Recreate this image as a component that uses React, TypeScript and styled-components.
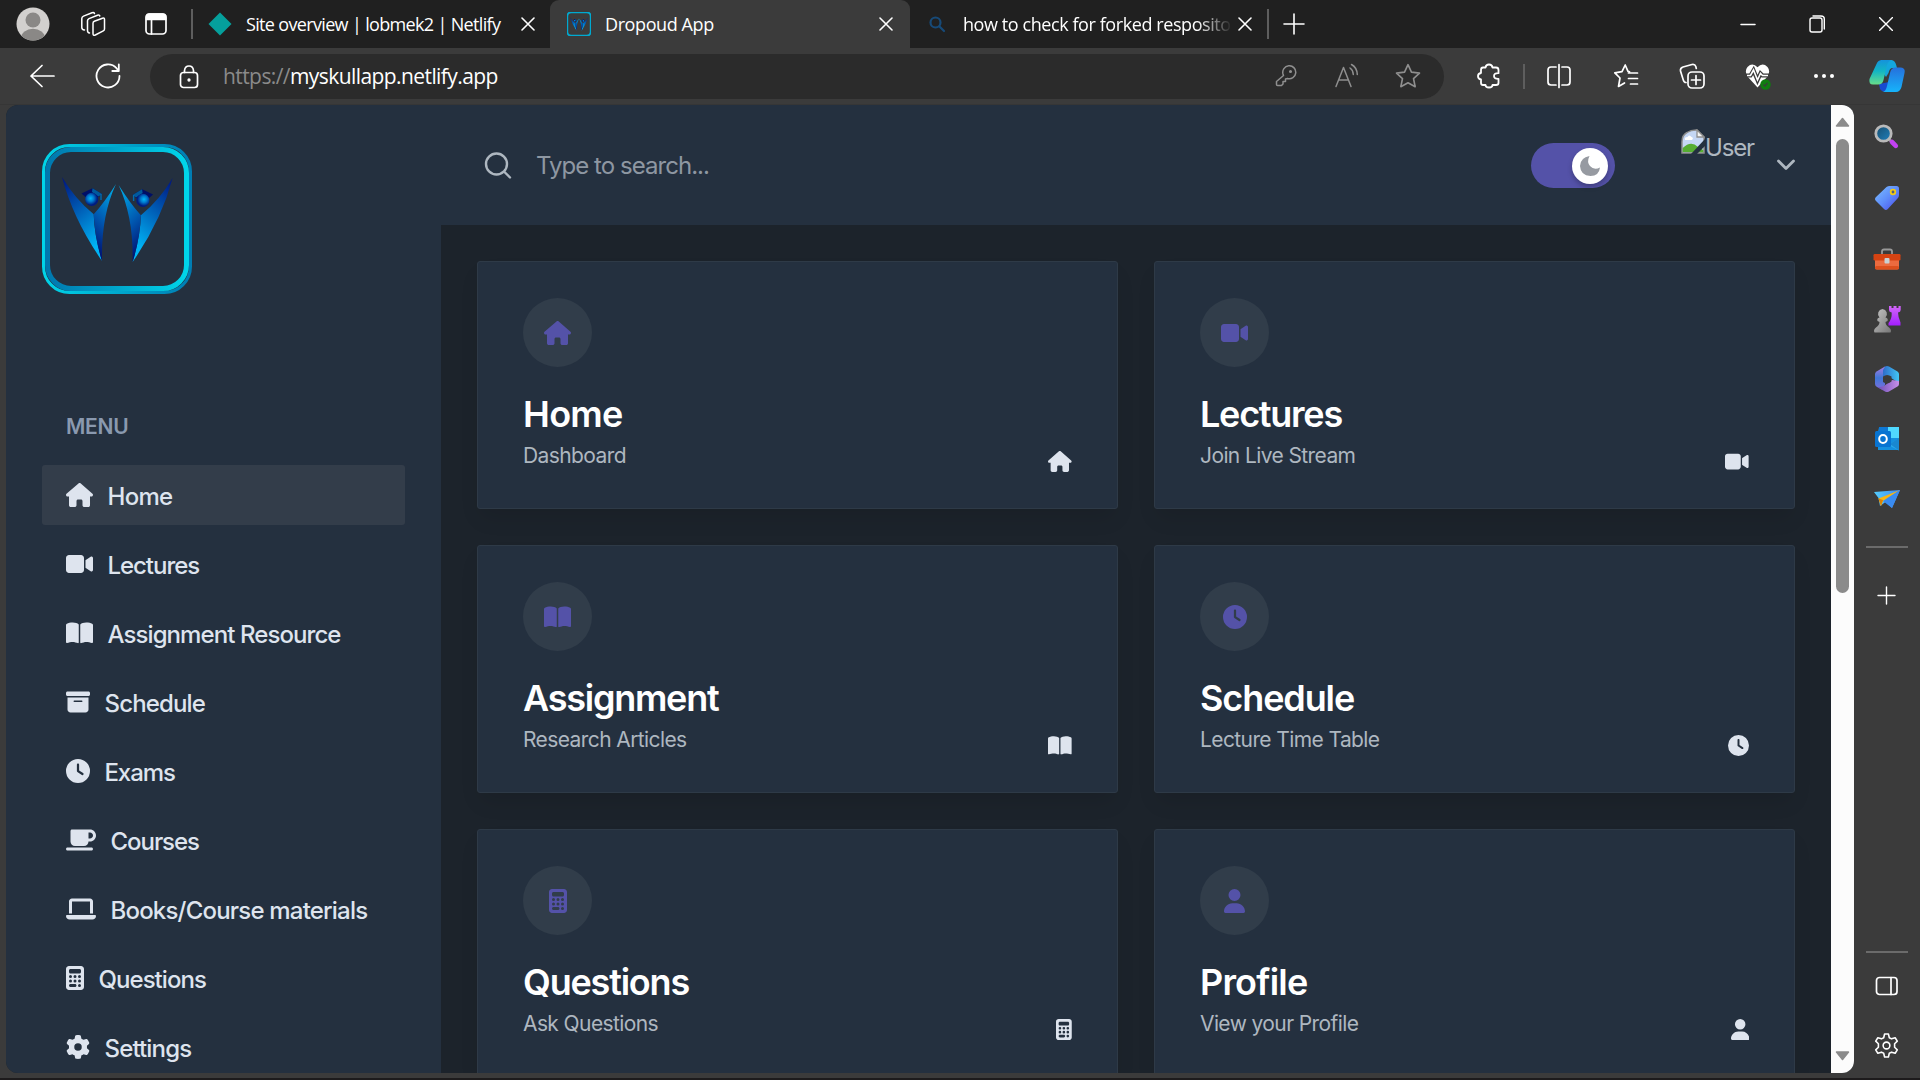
import React from "react";
import styled, { createGlobalStyle, css } from "styled-components";
import {
  FaHouse, FaVideo, FaBookOpen, FaBoxArchive, FaClock, FaMugSaucer,
  FaLaptop, FaCalculator, FaGear, FaUser,
} from "react-icons/fa6";

const GlobalStyle = createGlobalStyle`
  * { box-sizing: border-box; }
  body { margin: 0; overflow: hidden; background: #3b3b3b; }
  svg { display: block; flex: none; }
`;

const uiFont = `"Open Sans", "Noto Sans", sans-serif`;
const pageFont = `Inter, "Liberation Sans", sans-serif`;

/* ---------- browser frame ---------- */

const Window = styled.div`
  width: 1920px;
  height: 1080px;
  display: flex;
  flex-direction: column;
  background: #3b3b3b;
  overflow: hidden;
  border-bottom: 2px solid #1d1b1c;
`;

const TitleBar = styled.header`
  height: 48px;
  flex: none;
  display: flex;
  align-items: stretch;
  background: #202020;
  color: #fff;
  font-family: ${uiFont};
`;

const Slot = styled.span<{ $w: number }>`
  width: ${(p) => p.$w}px;
  flex: none;
  display: flex;
  align-items: center;
  justify-content: center;
`;

const Separator = styled.span<{ $h: number }>`
  width: 2px;
  height: ${(p) => p.$h}px;
  flex: none;
  align-self: center;
  background: #5e5e5e;
`;

const TabItem = styled.div<{ $active?: boolean }>`
  width: ${(p) => (p.$active ? 360 : 357)}px;
  flex: none;
  display: flex;
  align-items: center;
  padding-left: ${(p) => (p.$active ? 17 : 15)}px;
  padding-right: ${(p) => (p.$active ? 12 : 10)}px;
  ${(p) => p.$active && css`
    background: #3b3b3b;
    border-radius: 9px 9px 0 0;
  `}
`;

const TabTitle = styled.span<{ $fade?: boolean; $track: number }>`
  flex: 1;
  margin-left: 14px;
  font-size: 18px;
  line-height: 46px;
  padding-bottom: 1px;
  letter-spacing: ${(p) => p.$track}px;
  white-space: nowrap;
  ${(p) => p.$fade && css`
    margin-right: -2px;
    mask-image: linear-gradient(90deg, #000 86%, transparent 99%);
  `}
`;

const Spacer = styled.span`flex: 1;`;

const Toolbar = styled.div`
  height: 57px;
  flex: none;
  display: flex;
  align-items: center;
  padding: 0 0 1px 9px;
  background: #3b3b3b;
  box-shadow: inset 0 -1px 0 #363636;
`;

const AddressBar = styled.div`
  width: 1294px;
  height: 45px;
  flex: none;
  margin-left: 9px;
  padding: 0 7px 0 27px;
  border-radius: 23px;
  background: #2b2b2b;
  display: flex;
  align-items: center;
`;

const Url = styled.span`
  flex: 1;
  margin-left: 22px;
  font-family: ${uiFont};
  font-size: 21px;
  letter-spacing: -0.58px;
  color: #fff;
  span { color: #8a8a8a; }
`;

const Body = styled.div`
  flex: 1;
  min-height: 0;
  display: flex;
  padding: 0 0 5px 6px;
`;

const Viewport = styled.div`
  width: 1848px;
  flex: none;
  display: flex;
  overflow: hidden;
  border-radius: 12px;
  background: #1c232b;
  font-family: ${pageFont};
`;

const ScrollTrack = styled.div`
  width: 23px;
  flex: none;
  display: flex;
  flex-direction: column;
  align-items: center;
  justify-content: space-between;
  padding: 12px 0 12px;
  background: #fcfcfc;
`;

const ScrollThumb = styled.div`
  width: 13px;
  height: 454px;
  margin-top: 12px;
  margin-bottom: auto;
  border-radius: 7px;
  background: #8b8b8b;
`;

const EdgeRail = styled.aside`
  flex: 1;
  display: flex;
  flex-direction: column;
  align-items: center;
  padding: 2px 1px 0 0;
`;

const RailSlot = styled.span<{ $h?: number }>`
  height: ${(p) => p.$h || 60}px;
  display: flex;
  align-items: center;
  justify-content: center;
`;

const RailRule = styled.span`
  width: 42px;
  height: 2px;
  background: #6b6b6b;
`;

/* ---------- dashboard page ---------- */

const Sidebar = styled.nav`
  width: 435px;
  flex: none;
  padding: 39px 36px 0;
  background: #24303f;
`;

const MenuHeading = styled.h3`
  margin: 115px 0 0 24px;
  height: 56px;
  font-size: 21px;
  font-weight: 600;
  line-height: 36px;
  letter-spacing: -0.3px;
  color: #8a99af;
`;

const MenuList = styled.ul`
  margin: 0;
  padding: 0;
  display: flex;
  flex-direction: column;
  gap: 9px;
  list-style: none;
`;

const MenuItem = styled.li<{ $active?: boolean; $track?: number }>`
  height: 60px;
  padding: 0 24px;
  display: flex;
  align-items: center;
  gap: 15px;
  border-radius: 3px;
  font-size: 24px;
  font-weight: 500;
  letter-spacing: ${(p) => p.$track ?? -0.92}px;
  white-space: nowrap;
  color: #dee4ee;
  background: ${(p) => (p.$active ? "#333d4a" : "transparent")};
  span { padding-top: 2px; margin-left: -0.5px; }
`;

const Main = styled.main`
  width: 1390px;
  flex: none;
  display: flex;
  flex-direction: column;
`;

const Header = styled.div`
  height: 120px;
  flex: none;
  display: flex;
  align-items: center;
  padding: 0 36px 0 43px;
  background: #24303f;
`;

const SearchHint = styled.span`
  flex: 1;
  margin-left: 23px;
  padding-top: 1px;
  font-size: 24px;
  letter-spacing: -0.96px;
  color: #8e97a2;
`;

const Toggle = styled.div`
  width: 84px;
  height: 45px;
  flex: none;
  margin-top: 1px;
  padding-right: 7px;
  border-radius: 23px;
  background: #5452a8;
  display: flex;
  align-items: center;
  justify-content: flex-end;
`;

const Knob = styled.span`
  width: 36px;
  height: 36px;
  border-radius: 50%;
  background: #fff;
  box-shadow: 0 3px 5px rgba(0, 0, 0, 0.25);
  display: flex;
  align-items: center;
  justify-content: center;
`;

const UserBox = styled.div`
  width: 72px;
  height: 72px;
  flex: none;
  margin: 0 24px 0 66px;
  display: flex;
  align-items: flex-start;
  font-size: 24px;
  line-height: 38px;
  letter-spacing: -1.2px;
  color: #aeb7c0;
`;

const CardGrid = styled.section`
  padding: 36px;
  display: grid;
  grid-template-columns: 1fr 1fr;
  grid-auto-rows: 248px;
  gap: 36px;
`;

const CardBox = styled.article`
  padding: 36px 45px;
  border: 1px solid #2e3a47;
  border-radius: 3px;
  background: #24303f;
  box-shadow: 0 12px 20px -4px rgba(0, 0, 0, 0.1);
`;

const Badge = styled.div`
  width: 69px;
  height: 69px;
  border-radius: 50%;
  background: #313d4a;
  color: #5452a8;
  display: flex;
  align-items: center;
  justify-content: center;
  padding-top: 1px;
`;

const CardFoot = styled.div`
  margin-top: 24px;
  display: flex;
  justify-content: space-between;
  align-items: flex-end;
  color: #dee4ee;
  > svg { margin-bottom: 1px; }
`;

const CardTitle = styled.h4<{ $track: number }>`
  margin: 0;
  font-size: 36px;
  line-height: 46px;
  font-weight: 600;
  letter-spacing: ${(p) => p.$track}px;
  color: #fff;
`;

const CardNote = styled.span`
  display: block;
  height: 36px;
  font-size: 21px;
  line-height: 38px;
  letter-spacing: -0.6px;
  color: #aeb7c0;
`;

/* ---------- drawings ---------- */

type GlyphProps = {
  w?: number; h?: number; box?: string; color?: string; sw?: number; children: React.ReactNode;
};
const Glyph = ({ w = 24, h = w, box, color = "#fff", sw = 1.5, children }: GlyphProps) => (
  <svg width={w} height={h} viewBox={box || `0 0 ${w} ${h}`} fill="none" stroke={color}
    strokeWidth={sw} strokeLinecap="round" strokeLinejoin="round">{children}</svg>
);

const Logo = ({ size, id }: { size: number; id: string }) => {
  const u = (n: string) => `url(#${id}${n})`;
  const small = size < 40;
  return (
    <svg width={size} height={size} viewBox="0 0 150 150">
      <defs>
        <linearGradient id={id + "a"}><stop offset="0" stopColor="#00d4e8" /><stop offset="1" stopColor="#007db3" /></linearGradient>
        <linearGradient id={id + "b"}><stop offset="0" stopColor="#0077ae" /><stop offset="1" stopColor="#00d5ea" /></linearGradient>
        <linearGradient id={id + "c"} x1="0" y1="0" x2="0.4" y2="1"><stop offset="0" stopColor="#00127c" /><stop offset=".55" stopColor="#0067bd" /><stop offset="1" stopColor="#00b4f5" /></linearGradient>
        <linearGradient id={id + "d"} x1=".6" y1="0" x2=".3" y2="1"><stop offset="0" stopColor="#00a5e4" /><stop offset=".5" stopColor="#0058b0" /><stop offset="1" stopColor="#000a6c" /></linearGradient>
        <radialGradient id={id + "e"} cx=".42" cy=".42"><stop offset="0" stopColor="#00b9fa" /><stop offset=".5" stopColor="#0078cd" /><stop offset="1" stopColor="#001b80" /></radialGradient>
      </defs>
      <rect x="1.5" y="1.5" width="147" height="147" rx="26" fill="none" stroke={small ? "#00a9d0" : u("a")} strokeWidth={small ? 12 : 3} />
      {!small && <rect x="5.5" y="5.5" width="139" height="139" rx="23.5" fill="none" stroke={u("b")} strokeWidth="5" />}
      {[false, true].map((flip) => (
        <g key={String(flip)} transform={flip ? "translate(150.6 1) scale(-1 1)" : undefined}>
          <path d="M20 33Q33 55 51.7 70.3Q52 90 60 117Q31 75 20 33Z" fill={u("c")} />
          <path d="M74 40Q62 59 51.7 70.3Q53 96 60 117Q59 72 74 40Z" fill={u("d")} />
          <path d="M39.5 49.5L50.5 44.2L60 50L56.5 53H43.500Z" fill="#000f66" />
          <path d="M50.5 44.2L60 50L56.5 52.500L50 48Z" fill="#005a9c" />
          <circle cx="49.7" cy="55.4" r="6.6" fill={u("e")} />
          <path d="M59 50V56" stroke="#006cb0" strokeWidth="1.4" />
        </g>
      ))}
    </svg>
  );
};

const Cross = ({ s = 12, sw = 1.6 }: { s?: number; sw?: number }) => (
  <Glyph w={14} sw={sw}><path d={`M${7 - s / 2} ${7 - s / 2}l${s} ${s}m0-${s}l-${s} ${s}`} /></Glyph>
);
const Plus = ({ s = 20, sw = 1.6 }: { s?: number; sw?: number }) => (
  <Glyph w={s + 2} sw={sw}><path d={`M${s / 2 + 1} 1v${s}M1 ${s / 2 + 1}h${s}`} /></Glyph>
);

const Avatar = () => (
  <svg width="34" height="34" viewBox="0 0 34 34">
    <clipPath id="av"><circle cx="17" cy="17" r="16.5" /></clipPath>
    <g clipPath="url(#av)"><rect width="34" height="34" fill="#d2d0ce" />
      <circle cx="17" cy="13" r="7.5" fill="#8a8886" /><ellipse cx="17" cy="31" rx="12" ry="9.2" fill="#8a8886" /></g>
  </svg>
);

const Workspaces = () => (
  <Glyph w={26} h={26}>
    <path d="M13 12.200Q13 10.800 14.300 10.300L22.500 7.200Q24.500 6.600 24.500 8.500V18Q24.500 19.300 23.300 19.900L15.300 24Q13 25 13 22.500Z" />
    <path d="M9.500 22Q7.500 21.800 7.500 19.500V9.800Q7.500 8.300 9 7.600L17.500 4.200Q19.500 3.700 19.800 5" />
    <path d="M4.500 19Q1.800 18.800 1.800 16.500V7.500Q1.800 5.800 3.500 5.100L12 1.800Q14 1.200 14.500 2.500" />
  </Glyph>
);

const TabActions = () => (
  <Glyph w={24} h={24} sw={1.7}><rect x="2" y="2" width="20" height="20" rx="3.500" /><path d="M2.500 3.500Q3 2 5 2h14q2 0 2.700 1.500V7.500H2.500Z" fill="#fff" /><path d="M7.500 7.500V22" /></Glyph>
);

const starPath = "M12 1.500L15.200 8.400L22.600 9.300L17.100 14.400L18.600 21.900L12 18.200L5.400 21.900L6.900 14.400L1.400 9.300L8.800 8.400Z";
const gearPath = "M10.300 1.800h3.400l.8 3.300 2 1 3.200-1 1.900 3-2.400 2.400v3l2.400 2.400-1.900 3-3.200-1-2 1-.8 3.300h-3.400l-.8-3.300-2-1-3.200 1-1.900-3 2.400-2.400v-3L2.400 8.100l1.900-3 3.200 1 2-1Z";

const Copilot = () => (
  <svg width="38" height="34" viewBox="0 0 38 34">
    <defs>
      <linearGradient id="cp1" x1="0" y1="0" x2="0" y2="1"><stop offset="0" stopColor="#1592dc" /><stop offset=".45" stopColor="#12b5c4" /><stop offset="1" stopColor="#67dd8a" /></linearGradient>
      <linearGradient id="cp2" x1="0" y1="0" x2="0" y2="1"><stop offset="0" stopColor="#2670dc" /><stop offset="1" stopColor="#16b4fb" /></linearGradient>
    </defs>
    <path d="M11 25L21 23L18 33Q14 33 12 30Z" fill="#174bd0" />
    <path d="M13 1H23.500Q27 1.500 28.200 6L29 9H24Q21.500 9.500 20.500 14L18 18L14 12Z" fill="#14a6dd" />
    <path d="M8.500 5Q10 1 14 1H23.500Q20 2 18.800 7L15.500 21Q14.500 25.500 10 25.500H5Q.5 25.500 1.500 20Z" fill="url(#cp1)" />
    <path d="M22 14Q23 8.500 27.500 8.500H33Q37.700 9 36.500 14L33.500 28Q32 33 28 33H14.500Q18 32.500 19 27Z" fill="url(#cp2)" />
  </svg>
);

const HeartPulse = () => (
  <svg width="26" height="28" viewBox="0 0 26 28" fill="none">
    <path d="M12.500 25.500L2.500 14.500Q-.8 9 2.500 5Q7.500 0 12.500 5.200Q17.500 0 22.500 5Q25.800 9 22.500 14.500Z" fill="#fff" />
    <path d="M0 13.500H5.500L8.500 8.500L12.500 18L15.500 11.500L17.500 13.500H26" stroke="#3b3b3b" strokeWidth="4.200" />
    <path d="M2 13.500H5.500L8.500 8L12.500 18L15.500 11.500L17.500 13.500H23" stroke="#fff" strokeWidth="1.600" />
    <circle cx="20.500" cy="22.500" r="5.200" fill="#107c10" /><path d="M18.500 22.500l1.500 1.500 2.500-3" stroke="#3b3b3b" strokeWidth="1.200" />
  </svg>
);

const BrokenImage = () => (
  <svg width="24" height="25" viewBox="0 0 24 25">
    <path d="M1 24V13Q1 6 6 3.500Q10 .8 16 1L23 8V24Z" fill="#c5d7f5" stroke="#8e8e8e" strokeWidth="1.500" />
    <path d="M16 1V8H23Z" fill="#f4f4f4" stroke="#8e8e8e" strokeWidth="1.300" />
    <path d="M4 11Q3 8 6.500 8Q8 5 10.500 8Q13 9 11 11Z" fill="#fff" />
    <path d="M1.700 23V19Q10 11 17 18L22.300 21V23.300Z" fill="#56ad32" />
    <path d="M24 10L10 25H16L24 17Z" fill="#24303f" />
  </svg>
);

const RailSearch = () => (
  <svg width="28" height="28" viewBox="0 0 28 28">
    <defs><linearGradient id="rs" x1="0" y1="0" x2="1" y2="1"><stop offset="0" stopColor="#174d6e" /><stop offset="1" stopColor="#2081bd" /></linearGradient></defs>
    <path d="M15.500 16L20 20" stroke="#999" strokeWidth="3" />
    <circle cx="10.500" cy="10.500" r="7.700" fill="url(#rs)" stroke="#b9b9b9" strokeWidth="2.800" />
    <path d="M19 19L22.800 22.800" stroke="#c342f2" strokeWidth="4.600" strokeLinecap="round" />
  </svg>
);
const RailTag = () => (
  <svg width="26" height="26" viewBox="0 0 26 26">
    <defs><linearGradient id="rt" x1="0" y1="0" x2="1" y2="1"><stop offset="0" stopColor="#7cc0ff" /><stop offset=".5" stopColor="#5f8efa" /><stop offset="1" stopColor="#4a48e8" /></linearGradient></defs>
    <path d="M12.500 2Q14 1 15.500 1H22.500Q25 1 25 3.500V10Q25 12 23.500 13.500L13.800 24Q12 26 10 24L2 16Q0 14 2 12Z" fill="url(#rt)" />
    <circle cx="19" cy="7" r="2.300" fill="#53607a" stroke="#f2ca18" strokeWidth="1.800" />
  </svg>
);
const RailToolbox = () => (
  <svg width="28" height="22" viewBox="0 0 28 22">
    <path d="M9 6V3.500Q9 1.500 11 1.500H17Q19 1.500 19 3.500V6" fill="none" stroke="#999" strokeWidth="1.800" />
    <rect x="2" y="10" width="24" height="11.500" rx="2" fill="#ec6b3f" /><rect x="2" y="18" width="24" height="3.500" rx="1.500" fill="#dc501e" />
    <rect x=".5" y="6" width="27" height="6.500" rx="1.200" fill="#d64312" /><rect x="11.500" y="10" width="5" height="5.500" rx="1" fill="#c9d0d4" />
  </svg>
);
const RailChess = () => (
  <svg width="28" height="28" viewBox="0 0 28 28">
    <defs>
      <linearGradient id="ch1" x1="0" x2="0" y1="0" y2="1"><stop stopColor="#d167f7" /><stop offset="1" stopColor="#a31eff" /></linearGradient>
      <linearGradient id="ch2" x1="0" x2="1" y1="0" y2="1"><stop stopColor="#c5c5c5" /><stop offset="1" stopColor="#777" /></linearGradient>
    </defs>
    <path d="M16 1H18.500V3H20.500V1H23.500V3H25.500V1H27.700V5Q27.700 7 25 7.500Q25 12 27.500 17.500V20.500H15.500V18Q19 14 18.700 7.500Q16 7 16 5Z" fill="url(#ch1)" />
    <path d="M9.500 4A5 5 0 0 1 12.500 12.500Q15.500 13 14.500 16L12.500 17Q12.500 20 16 22.500Q19 25 17.500 27.500H1.500Q0 25 3 22.500Q6.500 20 6.500 17L4.500 16Q3.500 13 6.500 12.500A5 5 0 0 1 9.500 4Z" fill="url(#ch2)" />
  </svg>
);
const RailOffice = () => (
  <svg width="26" height="28" viewBox="0 0 26 28">
    <defs>
      <linearGradient id="of1" x1="0" y1="0" x2="0" y2="1"><stop stopColor="#a87be2" /><stop offset=".5" stopColor="#3f77d6" /><stop offset="1" stopColor="#7b6edc" /></linearGradient>
      <linearGradient id="of2"><stop stopColor="#2d6dcc" /><stop offset="1" stopColor="#42c6f2" /></linearGradient>
      <linearGradient id="of3"><stop stopColor="#6f51b8" /><stop offset="1" stopColor="#c78fe8" /></linearGradient>
    </defs>
    <path d="M11 1.500L2.500 6.500Q1 7.500 1 9V19Q1 21 3 22L8 24.500L11 20V6Z" fill="url(#of1)" />
    <path d="M11 1.500Q13 .3 15 1.500L23.500 6.500Q25 7.500 25 9V18L17 13L9 11V5Z" fill="url(#of2)" />
    <path d="M25 16V19Q25 20.800 23.500 21.500L15 26.500Q13 27.600 11 26.500L4 22.500L10 21L18 15Z" fill="url(#of3)" />
    <path d="M9 11.500Q13 8.500 17.500 11.500V16.500Q13 20 9 17Z" fill="#3b3b3b" />
  </svg>
);
const RailOutlook = () => (
  <svg width="26" height="26" viewBox="0 0 26 26">
    <path d="M5 1.500Q5 1 6 1H24Q25 1 25 2V24H4V6Z" fill="#1490df" /><rect x="14" y="1" width="11" height="11" fill="#50d9ff" />
    <rect x="5" y="1" width="9" height="8" fill="#0f78d4" /><path d="M25 12L14 19L25 24.500Z" fill="#28a8ea" /><path d="M25 12L16 18L25 24.500Z" fill="#0a67b7" opacity=".5" />
    <rect x="1" y="5" width="16" height="16" rx="1.500" fill="#0874d2" />
    <ellipse cx="9" cy="13" rx="3.800" ry="4" fill="none" stroke="#fff" strokeWidth="2" />
  </svg>
);
const RailPlane = () => (
  <svg width="28" height="20" viewBox="0 0 28 20">
    <defs><linearGradient id="pl"><stop stopColor="#54cdfb" /><stop offset="1" stopColor="#4187f0" /></linearGradient></defs>
    <path d="M1 3L27 1L19 19L12.500 13L7 17L5.500 9Z" fill="url(#pl)" />
    <path d="M27 1L5.500 9.500L8 17L10 12Z" fill="#f9b50f" /><path d="M5.500 9.500L8 17L10 11Z" fill="#da8204" />
    <path d="M27 1L10 12L19 19Z" fill="#3a8bf0" />
  </svg>
);

/* ---------- content ---------- */

const menu = [
  { label: "Home", Icon: FaHouse, w: 27, track: -0.7 },
  { label: "Lectures", Icon: FaVideo, w: 27, track: -1.05 },
  { label: "Assignment Resource", Icon: FaBookOpen, w: 27 },
  { label: "Schedule", Icon: FaBoxArchive, w: 24, track: -0.85 },
  { label: "Exams", Icon: FaClock, w: 24, track: -1.1 },
  { label: "Courses", Icon: FaMugSaucer, w: 30, track: -1.05 },
  { label: "Books/Course materials", Icon: FaLaptop, w: 30, track: -0.8 },
  { label: "Questions", Icon: FaCalculator, w: 18, track: -0.95 },
  { label: "Settings", Icon: FaGear, w: 24, track: -0.85 },
];

const cards = [
  { title: "Home", note: "Dashboard", Icon: FaHouse, ratio: 1.125, track: -0.7 },
  { title: "Lectures", note: "Join Live Stream", Icon: FaVideo, ratio: 1.125, track: -1.25 },
  { title: "Assignment", note: "Research Articles", Icon: FaBookOpen, ratio: 1.125, track: -1.25 },
  { title: "Schedule", note: "Lecture Time Table", Icon: FaClock, ratio: 1, track: -1.1 },
  { title: "Questions", note: "Ask Questions", Icon: FaCalculator, ratio: 0.75, track: -1.2 },
  { title: "Profile", note: "View your Profile", Icon: FaUser, ratio: 0.875, track: -0.8 },
];

const gray = "#8f8f8f";

export default function App() {
  return (
    <Window>
      <GlobalStyle />
      <TitleBar>
        <Slot $w={66}><Avatar /></Slot>
        <Slot $w={54}><Workspaces /></Slot>
        <Slot $w={71}><TabActions /></Slot>
        <Separator $h={30} />
        <TabItem>
          <Glyph w={24} color="none"><path d="M12 0.500L23.500 12L12 23.500L.5 12Z" fill="#05a09c" /></Glyph>
          <TabTitle $track={-0.66}>Site overview | lobmek2 | Netlify</TabTitle>
          <Slot $w={24}><Cross /></Slot>
        </TabItem>
        <TabItem $active>
          <Logo size={24} id="fav" />
          <TabTitle $track={-0.4}>Dropoud App</TabTitle>
          <Slot $w={24}><Cross /></Slot>
        </TabItem>
        <TabItem>
          <Glyph w={24} color="#174a78" sw={2.2}><circle cx="10.500" cy="10.500" r="5" /><path d="M14.500 14.500L19 19" /></Glyph>
          <TabTitle $fade $track={-0.42}>how to check for forked resposito</TabTitle>
          <Slot $w={24}><Cross /></Slot>
        </TabItem>
        <Separator $h={30} />
        <Slot $w={50}><Plus /></Slot>
        <Spacer />
        <Slot $w={69}><Glyph w={16}><path d="M1 8.500h14" /></Glyph></Slot>
        <Slot $w={69}>
          <Glyph w={18} h={20} sw={1.4}><rect x="2" y="4" width="12" height="14" rx="2" /><path d="M5 2H13Q16.300 2 16.300 5V15" /></Glyph>
        </Slot>
        <Slot $w={69}><Cross s={13.500} sw={1.4} /></Slot>
      </TitleBar>

      <Toolbar>
        <Slot $w={65}><Glyph w={26} sw={1.7}><path d="M25 13H2M13 2.500L2 13L13 23.500" /></Glyph></Slot>
        <Slot $w={67}><Glyph w={26} sw={1.8}><path d="M24.500 13A11.500 11.500 0 1 1 21.500 5.200L23.800 8M23.800 1.500V8H17.300" /></Glyph></Slot>
        <AddressBar>
          <Slot $w={24}>
            <Glyph w={20} h={25} sw={1.7}><rect x="1.500" y="8.500" width="17" height="15" rx="3" /><path d="M5.500 8.500V6.500Q6 2 10 2Q14 2 14.500 6.500V8.500" /><circle cx="10" cy="16" r=".8" fill="#fff" /></Glyph>
          </Slot>
          <Url><span>https://</span>myskullapp.netlify.app</Url>
          <Slot $w={60}>
            <Glyph w={22} color={gray}><path d="M8 9A6.500 6.500 0 1 1 12.500 13.500L10.500 14V16.500H8V19L6.500 20.500H2.500Q1.500 20.500 1.500 19.500V16.500L8.500 10.500Z" /><circle cx="15.500" cy="6.500" r=".8" /></Glyph>
          </Slot>
          <Slot $w={62}>
            <Glyph w={26} color={gray}>
              <path d="M2 23.500L9.500 4.500L17 23.500M4.700 17H14.300" />
              <path d="M16 5Q19 7 19.300 11.500M17.500 1.500Q23 4.500 23.300 11.500" />
            </Glyph>
          </Slot>
          <Slot $w={59}><Glyph w={26} box="0 0 24 24" color={gray}><path d={starPath} /></Glyph></Slot>
        </AddressBar>
        <Slot $w={10} />
        <Slot $w={69}>
          <Glyph w={26} h={26} sw={1.8}><path d="M9.500 4.500Q10 1.500 13 1.500Q16 1.500 16.500 4.500H20Q22.500 4.500 22.500 7V10.200Q18 10 18 13Q18 16 22.500 15.800V20Q22.500 22 20 22H16.500Q16.500 24.500 13 24.500Q9.500 24.500 9.500 22H7Q5 22 5 20V16.500Q2 16 2 13.200Q2 10.500 5 10V7Q5 4.500 7 4.500Z" /></Glyph>
        </Slot>
        <Separator $h={25} />
        <Slot $w={68}>
          <Glyph w={26} h={26} sw={1.7}><path d="M10 4H5Q2 4 2 7V19Q2 22 5 22H10M16 4H21Q24 4 24 7V19Q24 22 21 22H16M13 1.500V24.500" /></Glyph>
        </Slot>
        <Slot $w={66}>
          <Glyph w={26} h={26} sw={1.7}><path d="M16.500 8.800L15 8.400L12.200 2L9 8.600L1.800 9.800L7 15L5.500 23.500L11.500 20M15.500 10H24.500M15.500 15.500H24.500M17.500 21H24.500" /></Glyph>
        </Slot>
        <Slot $w={66}>
          <Glyph w={26} h={26} sw={1.7}><rect x="9" y="9" width="16" height="16" rx="4" /><path d="M17 12.500V21.500M12.500 17H21.500M7 19.500Q5 19.500 4.300 17L1.500 8Q1 5 4 4L13 1.500Q16 1 16.800 3.500L17.300 5.500" /></Glyph>
        </Slot>
        <Slot $w={66}><HeartPulse /></Slot>
        <Slot $w={66}>
          <Glyph w={22} h={6} color="none"><g fill="#fff"><circle cx="3" cy="3" r="2" /><circle cx="11" cy="3" r="2" /><circle cx="19" cy="3" r="2" /></g></Glyph>
        </Slot>
        <Slot $w={60}><Copilot /></Slot>
      </Toolbar>

      <Body>
        <Viewport>
          <Sidebar>
            <Logo size={150} id="main" />
            <MenuHeading>MENU</MenuHeading>
            <MenuList>
              {menu.map(({ label, Icon, w, track }, i) => (
                <MenuItem key={label} $active={i === 0} $track={track}>
                  <Icon style={{ width: w, height: 24 }} /><span>{label}</span>
                </MenuItem>
              ))}
            </MenuList>
          </Sidebar>
          <Main>
            <Header>
              <Glyph w={29} h={29} color="#aeb7c0" sw={2.4}><circle cx="12.500" cy="13" r="10.500" /><path d="M20.500 21L26 26.500" /></Glyph>
              <SearchHint>Type to search...</SearchHint>
              <Toggle>
                <Knob>
                  <Glyph w={22} color="none"><path d="M10.500 1Q7.500 7 11 11Q15 15.500 21 12.500Q20 21 11.500 21Q1.500 20.500 1 11Q1.500 2.500 10.500 1Z" fill="#969aa1" /></Glyph>
                </Knob>
              </Toggle>
              <UserBox><BrokenImage />User</UserBox>
              <Glyph w={18} h={12} color="#aeb7c0" sw={2.8}><path d="M1.500 2L9 9.500L16.500 2" /></Glyph>
            </Header>
            <CardGrid>
              {cards.map(({ title, note, Icon, ratio, track }) => (
                <CardBox key={title}>
                  <Badge><Icon style={{ width: 24 * ratio, height: 24 }} /></Badge>
                  <CardFoot>
                    <div>
                      <CardTitle $track={track}>{title}</CardTitle>
                      <CardNote>{note}</CardNote>
                    </div>
                    <Icon style={{ width: 21 * ratio, height: 21 }} />
                  </CardFoot>
                </CardBox>
              ))}
            </CardGrid>
          </Main>
          <ScrollTrack>
            <Glyph w={15} h={10} color="#8b8b8b"><path d="M7.500 1.500L13.500 9H1.500Z" fill="#8b8b8b" /></Glyph>
            <ScrollThumb />
            <Glyph w={15} h={10} color="#8b8b8b"><path d="M7.500 8.500L13.500 1H1.500Z" fill="#8b8b8b" /></Glyph>
          </ScrollTrack>
        </Viewport>
        <EdgeRail>
          <RailSlot><RailSearch /></RailSlot>
          <RailSlot $h={62}><RailTag /></RailSlot>
          <RailSlot><RailToolbox /></RailSlot>
          <RailSlot><RailChess /></RailSlot>
          <RailSlot><RailOffice /></RailSlot>
          <RailSlot><RailOutlook /></RailSlot>
          <RailSlot $h={59}><RailPlane /></RailSlot>
          <RailSlot $h={18} />
          <RailRule />
          <RailSlot $h={94}><Plus s={17} sw={1.4} /></RailSlot>
          <Spacer />
          <RailRule />
          <RailSlot $h={65}>
            <Glyph w={24} h={20} sw={1.7}><rect x="1.500" y="1.500" width="20.500" height="17" rx="3" /><path d="M16 1.500V18.500" /></Glyph>
          </RailSlot>
          <RailSlot $h={55}>
            <Glyph w={27} box="0 0 24 24" sw={1.4}><path d={gearPath} /><circle cx="12" cy="12" r="3" /></Glyph>
          </RailSlot>
        </EdgeRail>
      </Body>
    </Window>
  );
}
